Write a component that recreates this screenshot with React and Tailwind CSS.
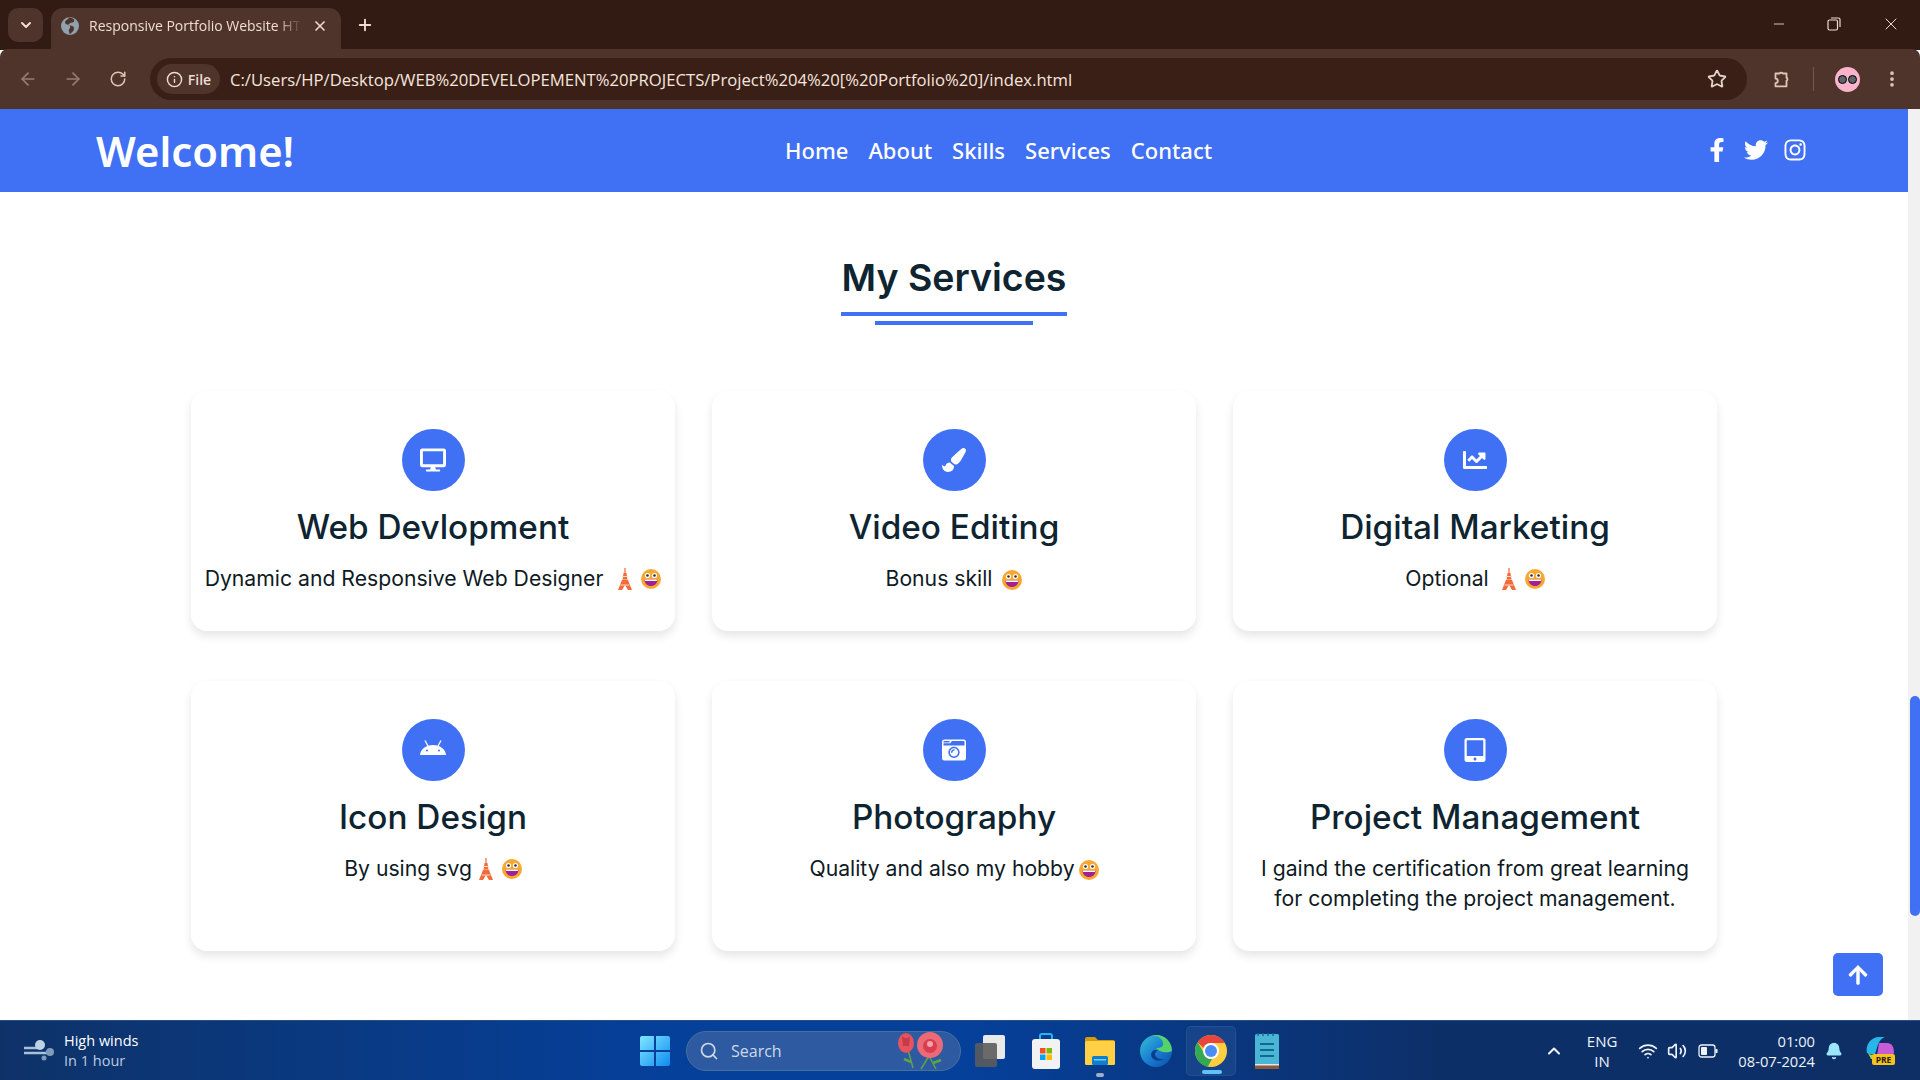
import {
  FaFacebookF, FaTwitter, FaInstagram, FaDesktop, FaPaintBrush, FaChartLine,
  FaCameraRetro, FaTabletAlt, FaArrowUp,
} from 'react-icons/fa';
import {
  ArrowLeft, ArrowRight, RotateCw, Info, Star, EllipsisVertical, ChevronDown,
  X, Plus, Minus, Search, ChevronUp, Wifi, Volume2, Bell,
} from 'lucide-react';

const poppins = '[font-family:Inter,sans-serif]';
const ubuntu = '[font-family:"Noto_Sans",sans-serif]';
const ui = '[font-family:"Open_Sans",sans-serif]';

function AndroidHead({ className }) {
  return (
    <svg viewBox="0 0 26 15" className={className} fill="currentColor">
      <path d="M0 15C.4 9.500 5.500 5 13 5s12.600 4.500 13 10z" />
      <path d="M5 .5l3 5.500M21 .5l-3 5.500" stroke="currentColor" strokeWidth="1.300" />
      <circle cx="7" cy="10.500" r="1" fill="#4070f4" />
      <circle cx="19" cy="10.500" r="1" fill="#4070f4" />
    </svg>
  );
}

function Tower() {
  return (
    <svg viewBox="0 0 16 22" className="w-[16px] h-[22px] inline-block shrink-0">
      <path d="M8 0v5" stroke="#f4845f" strokeWidth="1.500" />
      <path d="M6.500 5h3l1 7h-5z" fill="#f26b38" />
      <path d="M5 8.500h6M4.500 12h7" stroke="#fdd9c8" strokeWidth="1" />
      <path d="M5 12h6l4 10h-4l-3-5-3 5H1z" fill="#f26b38" />
      <path d="M3.500 17h9" stroke="#fdd9c8" strokeWidth="1" />
    </svg>
  );
}

function Smile() {
  return (
    <svg viewBox="0 0 20 20" className="w-[20px] h-[20px] inline-block shrink-0">
      <circle cx="10" cy="10" r="10" fill="#f8a830" />
      <circle cx="6.500" cy="6.500" r="2.600" fill="#fff" />
      <circle cx="13.500" cy="6.500" r="2.600" fill="#fff" />
      <circle cx="6.500" cy="6.500" r="1.300" fill="#3c2a20" />
      <circle cx="13.500" cy="6.500" r="1.300" fill="#3c2a20" />
      <path d="M3.500 10.500h13c0 4-2.800 6.500-6.500 6.500s-6.500-2.500-6.500-6.500z" fill="#a3208f" />
      <path d="M3.800 10.500h12.400l-.3 1.500H4.100z" fill="#fff" />
    </svg>
  );
}

const tower = <Tower />;
const smile = <Smile />;

const services = [
  { icon: <FaDesktop className="text-[26px]" />, title: 'Web Devlopment', text: <>Dynamic and Responsive Web Designer <span className="inline-flex items-center gap-[8px] ml-[8px] align-[-4px]">{tower}{smile}</span></> },
  { icon: <FaPaintBrush className="text-[24px]" />, title: 'Video Editing', text: <>Bonus skill <span className="inline-flex items-center ml-[4px] align-[-4px]">{smile}</span></> },
  { icon: <FaChartLine className="text-[24px]" />, title: 'Digital Marketing', text: <>Optional <span className="inline-flex items-center gap-[8px] ml-[6px] align-[-4px]">{tower}{smile}</span></> },
  { icon: <AndroidHead className="w-[26px] h-[15px] mb-[5px]" />, title: 'Icon Design', text: <>By using svg <span className="inline-flex items-center gap-[8px] align-[-4px]">{tower}{smile}</span></> },
  { icon: <FaCameraRetro className="text-[24px]" />, title: 'Photography', text: <>Quality and also my hobby<span className="inline-flex items-center ml-[4px] align-[-4px]">{smile}</span></> },
  { icon: <FaTabletAlt className="text-[24px]" />, title: 'Project Management', text: 'I gaind the certification from great learning for completing the project management.' },
];

function ServiceCard({ icon, title, text }) {
  return (
    <div className="bg-white rounded-[16px] shadow-[0_5px_10px_rgba(0,0,0,0.1)] py-[38px] px-[8px] flex flex-col items-center text-center">
      <div className="w-[63px] h-[62px] rounded-full bg-[#4070f4] text-white flex items-center justify-center">{icon}</div>
      <h3 className={`${poppins} mt-[12px] mb-[12px] text-[33.300px] leading-[48px] font-medium text-[#0e2431] whitespace-nowrap`}>{title}</h3>
      <p className={`${poppins} text-[21.200px] leading-[30px] text-[#0e1a24] px-[4px]`}>{text}</p>
    </div>
  );
}

function BrowserChrome() {
  return (
    <div className={`${ui} shrink-0`}>
      {/* tab strip */}
      <div className="h-[50px] bg-[#321b13] flex items-end text-[#f0dcd3]">
        <div className="w-[35px] h-[34px] ml-[8px] mb-[8px] bg-[#4f342b] rounded-[10px] flex items-center justify-center">
          <ChevronDown size={16} strokeWidth={3} />
        </div>
        <div className="w-[290px] h-[42px] ml-[8px] bg-[#4f342b] rounded-t-[12px] flex items-center pl-[10px] pr-[13px] pb-[7px] gap-[10px]">
          <svg viewBox="0 0 18 18" className="w-[18px] h-[18px] shrink-0">
            <circle cx="9" cy="9" r="9" fill="#8fa2ad" />
            <path d="M8 0.500C7 3 4 3 4 5.500S8 7 9 9s-2 3-1 6l1 2.500c1-2 4-3 4-6s-3-3-5-3 1-3 3-3 2.500-1 2-3C11.500 1 10 .5 8 .5z" fill="#4f342b" />
          </svg>
          <span className="flex-1 overflow-hidden whitespace-nowrap text-[14px] leading-[20px] [mask-image:linear-gradient(90deg,#000_88%,transparent_100%)]">Responsive Portfolio Website HTML</span>
          <X size={16} strokeWidth={2.500} />
        </div>
        <Plus size={18} strokeWidth={2.500} className="ml-[15px] mb-[16px]" />
        <div className="ml-auto flex items-center h-[50px] pb-[2px]">
          <Minus size={16} strokeWidth={1.300} className="mr-[40px]" />
          <svg viewBox="0 0 14 14" className="w-[14px] h-[14px] mr-[40px]" fill="none" stroke="currentColor" strokeWidth="1.200">
            <rect x="1" y="3" width="9.500" height="10" rx="1.500" />
            <path d="M4 1h7.500a1.500 1.500 0 0 1 1.500 1.500V10" />
          </svg>
          <X size={20} strokeWidth={1.200} className="mr-[19px]" />
        </div>
      </div>
      {/* toolbar */}
      <div className="h-[60px] bg-[#4f342b] rounded-t-[8px] -mt-px flex items-center text-[#e3c3b5]">
        <ArrowLeft size={20} className="ml-[18px] opacity-50" />
        <ArrowRight size={20} className="ml-[25px] opacity-50" />
        <RotateCw size={18} className="ml-[26px]" />
        <div className="ml-[23px] w-[1597px] h-[42px] bg-[#3a1f17] rounded-full flex items-center pl-[7px] pr-[20px]">
          <div className="h-[30px] w-[63px] bg-[#4f342b] rounded-full flex items-center justify-center gap-[5px] text-[#f0dcd3] text-[14px] font-semibold">
            <Info size={17} />File
          </div>
          <span className="ml-[10px] text-[#f6e6de] text-[16.670px] whitespace-nowrap">C:/Users/HP/Desktop/WEB%20DEVELOPEMENT%20PROJECTS/Project%204%20[%20Portfolio%20]/index.html</span>
          <Star size={20} strokeWidth={2.200} className="ml-auto text-[#e3d3cb]" />
        </div>
        <svg viewBox="0 0 24 24" className="ml-[23px] w-[22px] h-[22px]" fill="none" stroke="currentColor" strokeWidth="2" strokeLinejoin="round">
          <path d="M6 6h4.500a2 2 0 0 1 3.500 0H18v4.500a2 2 0 0 1 0 3.500V20H6v-3.500a2.500 2.500 0 0 0 0-5z" />
        </svg>
        <div className="ml-[21px] w-px h-[24px] bg-[#7a574a]" />
        <div className="ml-[21px] w-[25px] h-[25px] rounded-full bg-[#f9b4cc] flex items-center justify-center gap-[1px]">
          <span className="w-[9px] h-[9px] rounded-full bg-[#5b6468] border border-black" />
          <span className="w-[9px] h-[9px] rounded-full bg-[#5b6468] border border-black" />
        </div>
        <EllipsisVertical size={20} strokeWidth={2.500} className="ml-[22px]" />
      </div>
    </div>
  );
}

function WinLogo() {
  return (
    <svg viewBox="0 0 30 30" className="w-[30px] h-[30px]">
      <defs>
        <linearGradient id="win" x1="0" y1="0" x2="1" y2="1">
          <stop offset="0" stopColor="#7fe6ff" />
          <stop offset="1" stopColor="#0f8cf0" />
        </linearGradient>
      </defs>
      <path d="M0 2a2 2 0 0 1 2-2h12v14H0zM16 0h12a2 2 0 0 1 2 2v12H16zM0 16h14v14H2a2 2 0 0 1-2-2zM16 16h14v12a2 2 0 0 1-2 2H16z" fill="url(#win)" />
    </svg>
  );
}

function Roses() {
  return (
    <svg viewBox="0 0 50 38" className="w-[50px] h-[38px] ml-auto">
      <path d="M12 18l5 18M33 24l-8 13M33 24l7 13" stroke="#5ea34a" strokeWidth="1.500" fill="none" />
      <path d="M15 30l-7-3M37 31l8-3" stroke="#5ea34a" strokeWidth="2.500" />
      <ellipse cx="10" cy="11" rx="8" ry="10" fill="#e4535f" />
      <path d="M6 4c3 3 6 3 8 0l-1 10H7z" fill="#c73a48" />
      <circle cx="34" cy="13" r="13" fill="#ec6a78" />
      <circle cx="34" cy="14" r="7" fill="#d83d52" />
      <circle cx="34" cy="12" r="3" fill="#f7a2a8" />
    </svg>
  );
}

function Taskbar() {
  return (
    <div className={`${ui} h-[60px] shrink-0 border-t border-[#27507f] bg-[linear-gradient(90deg,#0e3268_0%,#05409b_35%,#05409b_50%,#0d2f68_75%,#0d2f66_100%)] flex items-center text-white`}>
      <div className="w-[640px] shrink-0 flex items-center pl-[24px] gap-[10px]">
        <svg viewBox="0 0 30 24" className="w-[30px] h-[24px]">
          <path d="M0 9h18M0 14h26" stroke="#a9c1d8" strokeWidth="2.500" />
          <circle cx="16" cy="6" r="5" fill="#bcd2e6" />
          <circle cx="26" cy="13" r="4" fill="#7f9dba" />
          <circle cx="20" cy="19" r="2.500" fill="#7f9dba" />
        </svg>
        <div className="text-[14.500px] leading-[20px]">
          <div>High winds</div>
          <div className="text-[#bccbe0]">In 1 hour</div>
        </div>
      </div>
      <WinLogo />
      <div className="ml-[16px] w-[275px] h-[40px] bg-[#2d5aa0] border border-[#47709f] rounded-full flex items-center pl-[12px] pr-[14px] text-[#cfd9e8]">
        <Search size={20} />
        <span className="ml-[12px] text-[16px]">Search</span>
        <Roses />
      </div>
      <div className="ml-[14px] w-[30px] h-[32px] relative">
        <div className="absolute right-0 top-0 w-[22px] h-[24px] rounded-[2px] bg-[#e9e9e9]" />
        <div className="absolute left-0 bottom-0 w-[22px] h-[24px] rounded-[2px] bg-[#5c5c5c]/90" />
      </div>
      {/* store */}
      <svg viewBox="0 0 30 36" className="ml-[26px] w-[30px] h-[36px]">
        <path d="M9 7V3a2 2 0 0 1 2-2h8a2 2 0 0 1 2 2v4" fill="none" stroke="#27b6e8" strokeWidth="2" />
        <rect x="1" y="6" width="28" height="30" rx="3" fill="#f2f2f2" />
        <rect x="9" y="15" width="5.500" height="5.500" fill="#f25022" />
        <rect x="15.500" y="15" width="5.500" height="5.500" fill="#7fba00" />
        <rect x="9" y="21.500" width="5.500" height="5.500" fill="#00a4ef" />
        <rect x="15.500" y="21.500" width="5.500" height="5.500" fill="#ffb900" />
      </svg>
      {/* explorer */}
      <div className="ml-[24px] w-[30px] relative flex flex-col">
        <svg viewBox="0 0 30 28" className="w-[30px] h-[28px]">
          <path d="M0 2a2 2 0 0 1 2-2h8l3 3h15a2 2 0 0 1 2 2v4H0z" fill="#d99b06" />
          <rect y="4" width="30" height="24" rx="1.500" fill="#ffd045" />
          <rect x="7" y="19" width="16" height="9" rx="1.500" fill="#0f7ecb" />
          <rect x="9" y="22" width="12" height="1.500" fill="#7cc6f2" />
        </svg>
        <div className="absolute top-[36px] left-[11px] w-[8px] h-[4px] rounded-full bg-[#9fb0c4]" />
      </div>
      {/* edge */}
      <svg viewBox="0 0 32 32" className="ml-[25px] w-[32px] h-[32px]">
        <defs>
          <linearGradient id="edge" x1="0" y1="0" x2="1" y2="1">
            <stop offset="0" stopColor="#35c1d0" />
            <stop offset="0.500" stopColor="#1b7fd4" />
            <stop offset="1" stopColor="#0c4fa8" />
          </linearGradient>
        </defs>
        <circle cx="16" cy="16" r="16" fill="url(#edge)" />
        <path d="M32 16A16 16 0 0 0 10 1c8-2 14 4 13 9-1 3-5 3-7 3 2 3 10 6 16 3z" fill="#56d26b" />
        <path d="M14 15c-4 2-4 8 1 10 3 1 6 1 9-1-5 1-9-2-9-5 0-2 2-3 3-4z" fill="#0a3f8c" />
      </svg>
      {/* chrome tile */}
      <div className="ml-[14px] w-[50px] h-[50px] rounded-[5px] bg-[#2a5596]/40 border border-[#2c5a9a]/60 relative flex items-center justify-center">
        <svg viewBox="0 0 32 32" className="w-[32px] h-[32px]">
          <circle cx="16" cy="16" r="16" fill="#ffcf3f" />
          <path d="M16 0a16 16 0 0 1 13.860 8H16a8 8 0 0 0-7.500 5L2.600 7.300A16 16 0 0 1 16 0z" fill="#e8453c" />
          <path d="M2.600 7.300 9 18a8 8 0 0 0 8 6l-4.200 7.700A16 16 0 0 1 2.600 7.300z" fill="#34a853" />
          <circle cx="16" cy="16" r="8" fill="#fff" />
          <circle cx="16" cy="16" r="6" fill="#4a8bf5" />
        </svg>
        <div className="absolute bottom-[1px] left-[15px] w-[20px] h-[4px] rounded-full bg-[#5cc4fa]" />
      </div>
      {/* notepad */}
      <svg viewBox="0 0 24 36" className="ml-[19px] w-[24px] h-[36px]">
        <rect y="1" width="24" height="35" rx="1.500" fill="#4ab5d4" />
        <rect y="32" width="24" height="4" fill="#8b5a3a" />
        <rect y="31" width="24" height="1.500" fill="#e6e6e6" />
        <path d="M5 11h14M5 17h14M5 23h14" stroke="#0f6a8f" strokeWidth="2" />
        <path d="M3 0v3M8 0v3M13 0v3M18 0v3" stroke="#1a6a8a" strokeWidth="1.500" />
      </svg>

      <div className="ml-auto flex items-center text-[#eef3fa]">
        <ChevronUp size={20} strokeWidth={2.500} />
        <div className="ml-[23px] text-center text-[15px] leading-[20px]">
          <div>ENG</div>
          <div>IN</div>
        </div>
        <Wifi size={20} className="ml-[21px]" />
        <Volume2 size={20} className="ml-[9px]" />
        <svg viewBox="0 0 20 14" className="ml-[11px] w-[20px] h-[14px]" fill="none">
          <rect x="1" y="1" width="16" height="12" rx="2.500" stroke="currentColor" strokeWidth="1.300" />
          <rect x="3" y="3" width="6" height="8" rx="1" fill="currentColor" />
          <path d="M18.500 5v4" stroke="currentColor" strokeWidth="2" />
        </svg>
        <div className="ml-[20px] text-right text-[14.700px] leading-[20px]">
          <div>01:00</div>
          <div>08-07-2024</div>
        </div>
        <Bell size={18} fill="#9be6fb" stroke="#9be6fb" className="ml-[10px]" />
        <svg viewBox="0 0 30 28" className="ml-[22px] mr-[25px] w-[30px] h-[28px]">
          <path d="M2 16C0 8 6 0 14 0h6c-6 2-7 8-9 14l-1 3H4z" fill="#28b6e8" />
          <path d="M2 14c1 3 3 4 8 4h2l-2 4H6z" fill="#a3d93c" />
          <path d="M14 6h8c5 0 7 4 7 10l-3 3H12z" fill="#c75bd8" />
          <rect x="7" y="17" width="23" height="11" rx="2" fill="#f6c21c" />
          <text x="18.500" y="25.500" fontSize="8.500" fontWeight="700" textAnchor="middle" fill="#222" fontFamily="Open Sans, sans-serif">PRE</text>
        </svg>
      </div>
    </div>
  );
}

export default function App() {
  return (
    <div className="h-screen w-full flex flex-col overflow-hidden bg-white">
      <BrowserChrome />
      <div className="flex-1 min-h-0 flex">
        <div className="flex-1 min-w-0 relative flex flex-col">
          {/* Navbar */}
          <nav className={`${ubuntu} h-[83px] shrink-0 bg-[#4070f4] text-white flex items-center justify-between pl-[96px] pr-[101px]`}>
            <span className="text-[41.800px] font-semibold leading-none">Welcome!</span>
            <div className="flex items-center gap-[20px] mr-[2px] text-[22px] font-medium">
              <a>Home</a>
              <a>About</a>
              <a>Skills</a>
              <a>Services</a>
              <a>Contact</a>
            </div>
            <div className="flex items-center gap-[15px] text-[24px] mb-[1px]">
              <FaFacebookF />
              <FaTwitter />
              <FaInstagram />
            </div>
          </nav>

          {/* Services */}
          <main className="flex-1 flex flex-col items-center">
            <div className="pt-[58px] flex flex-col items-center">
              <h2 className={`${poppins} w-[226px] text-center text-[37.500px] leading-[56px] font-semibold text-[#0e2431] border-b-4 border-[#4070f4] pb-[6px] whitespace-nowrap`}>My Services</h2>
              <div className="mt-[5px] w-[158px] h-[4px] bg-[#4070f4]" />
            </div>
            <div className="mt-[66px] w-[1526px] grid grid-cols-3 gap-x-[37px] gap-y-[50px]">
              {services.map((s) => (
                <ServiceCard key={s.title} {...s} />
              ))}
            </div>
          </main>

          <button className="absolute left-[1833px] top-[844px] w-[50px] h-[43px] rounded-[5px] bg-[#4070f4] text-white flex items-center justify-center text-[22px]">
            <FaArrowUp />
          </button>
        </div>

        {/* page scrollbar */}
        <div className="w-[12px] shrink-0 bg-[#f1f1f1] flex flex-col">
          <div className="h-[587px] shrink-0" />
          <div className="h-[220px] w-[10px] ml-[2px] rounded-full bg-[#4070f4]" />
        </div>
      </div>
      <Taskbar />
    </div>
  );
}
